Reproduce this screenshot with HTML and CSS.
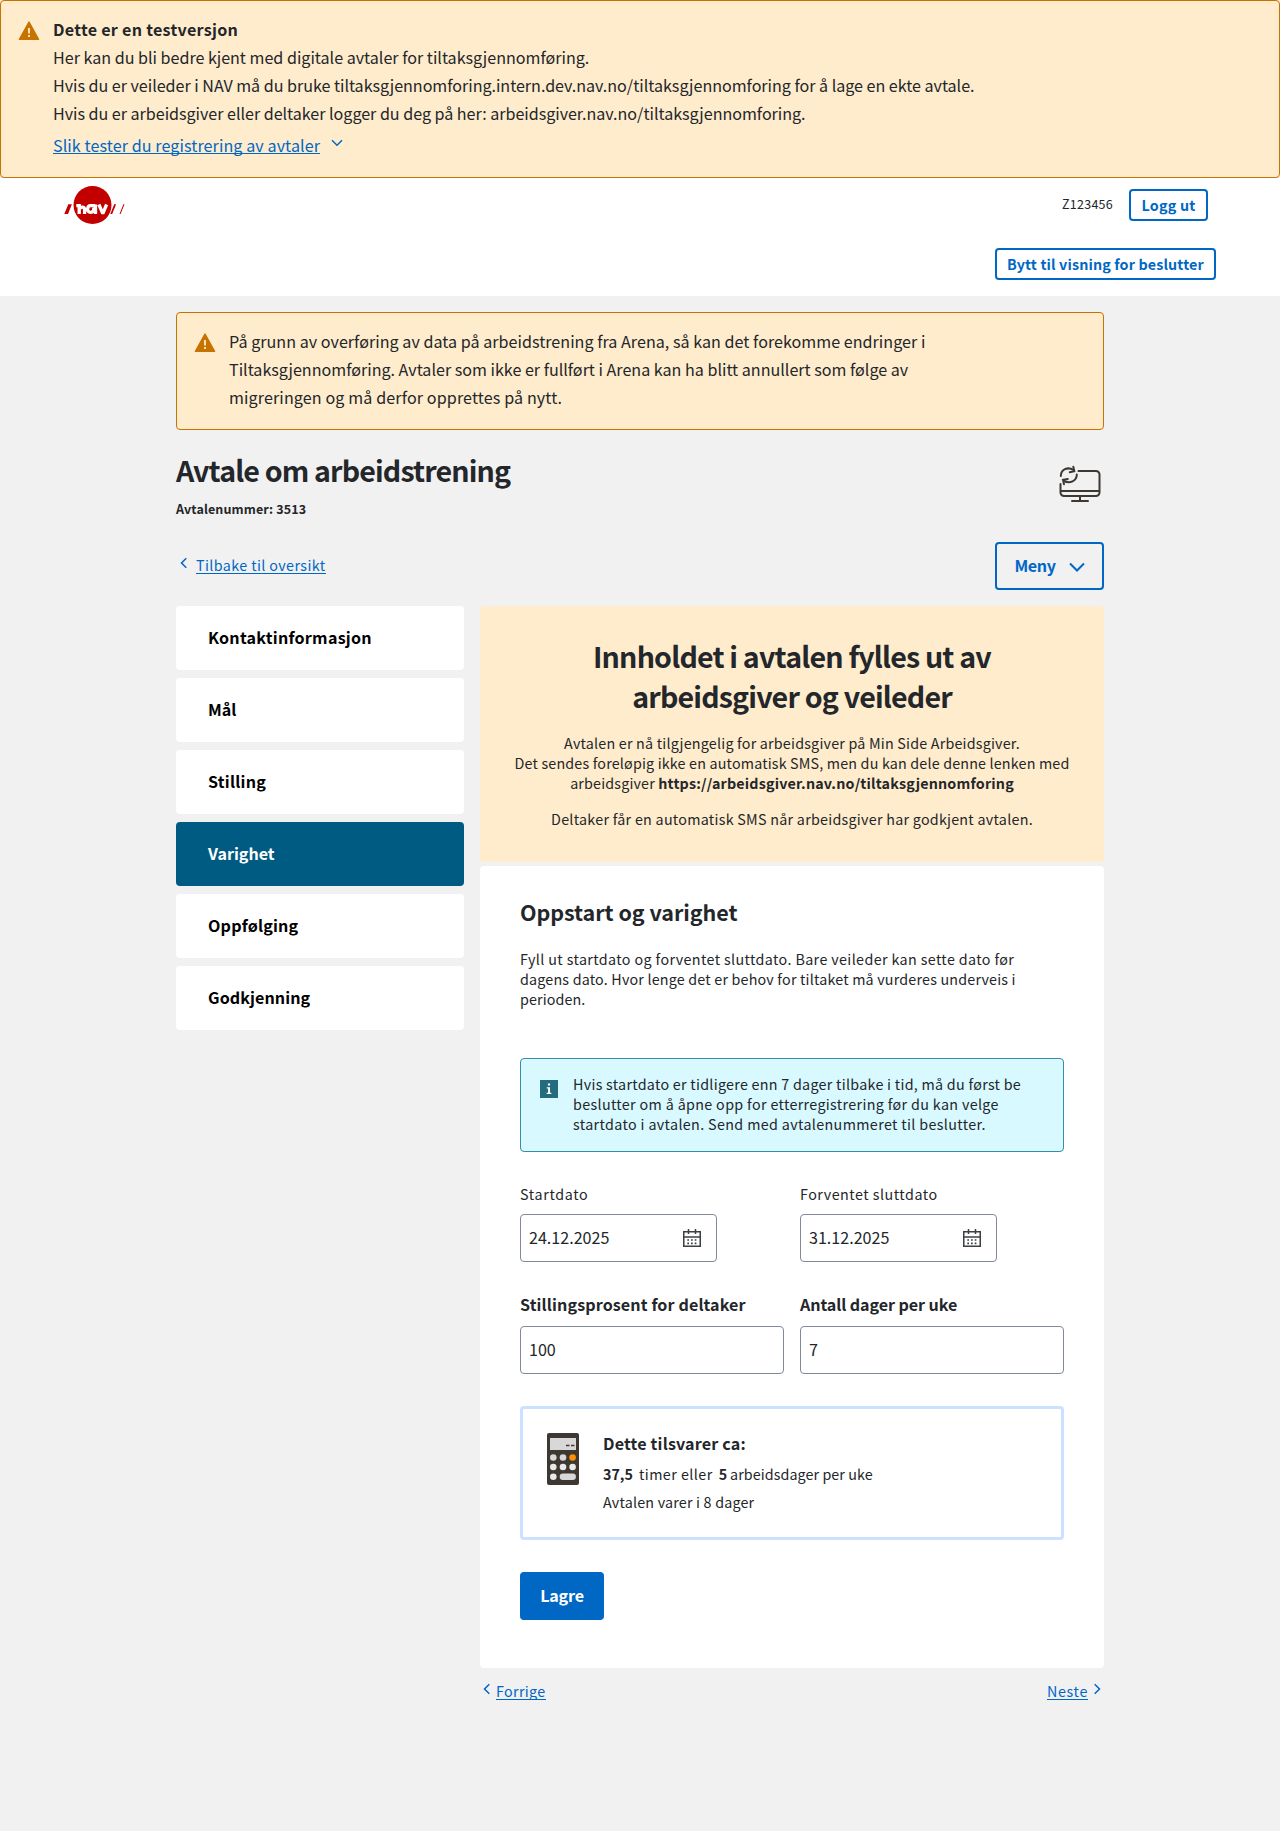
FILE: index.html
```html
<!DOCTYPE html>
<html lang="nb">
<head>
<meta charset="utf-8">
<title>Avtale om arbeidstrening</title>
<link rel="stylesheet" href="styles.css">
</head>
<body>
<section class="alert alert-test">
  <svg class="alert-icon" viewBox="0 0 24 24"><path fill="#c77300" fill-rule="evenodd" d="M12 2.250a.75.75 0 0 1 .66.39l9.520 17.250a.75.75 0 0 1-.65 1.110H2.470a.75.75 0 0 1-.65-1.110l9.520-17.250A.75.75 0 0 1 12 2.250ZM11.100 9v5.500h1.800V9ZM11.100 16v1.900h1.800V16Z"/></svg>
  <div class="alert-body">
    <strong class="lead">Dette er en testversjon</strong>
    <span class="l1">Her kan du bli bedre kjent med digitale avtaler for tiltaksgjennomføring.</span>
    <span class="l2">Hvis du er veileder i NAV må du bruke tiltaksgjennomforing.intern.dev.nav.no/tiltaksgjennomforing for å lage en ekte avtale.</span>
    <span class="l3">Hvis du er arbeidsgiver eller deltaker logger du deg på her: arbeidsgiver.nav.no/tiltaksgjennomforing.</span>
    <div class="expand"><a class="link" href="#">Slik tester du registrering av avtaler</a><svg class="chev-down" viewBox="0 0 12 8"><path d="M1 1.200l5 5 5-5"/></svg></div>
  </div>
</section>
<header class="header">
  <div class="header-top">
    <svg class="logo" viewBox="0 0 62 40">
      <circle cx="28.500" cy="20" r="19" fill="#c30000"/>
      <path fill="#c30000" d="M4.300 19.300h3.600L4 29H.3zM50.200 19.300h1.900L48.200 29h-1.900zM59.400 19.300h1.100L56.600 29h-1.100z"/>
      <path fill="none" stroke="#fff" stroke-width="3.300" d="M12.300 20.600h2.900v8.400M15.600 23.600c1.400-2.300 5-2 5 1v4.400M31.200 20.600h-4.600c-3.600 0-4.300 6.800 0 6.800 3.200 0 3.300-3.400 3.100-4.800M31.500 19.400V29M34.900 19.500l3.500 8.200h.8l3.400-8.200"/>
    </svg>
    <div class="user"><span class="ident">Z123456</span><button class="btn btn-small btn-logout">Logg ut</button></div>
  </div>
  <div class="header-sub"><button class="btn btn-small btn-switch">Bytt til visning for beslutter</button></div>
</header>
<main class="page">
  <section class="alert alert-arena">
    <svg class="alert-icon" viewBox="0 0 24 24"><path fill="#c77300" fill-rule="evenodd" d="M12 2.250a.75.75 0 0 1 .66.39l9.520 17.250a.75.75 0 0 1-.65 1.110H2.470a.75.75 0 0 1-.65-1.110l9.520-17.250A.75.75 0 0 1 12 2.250ZM11.100 9v5.500h1.800V9ZM11.100 16v1.900h1.800V16Z"/></svg>
    <div class="alert-body">
      <span class="a1">På grunn av overføring av data på arbeidstrening fra Arena, så kan det forekomme endringer i</span>
      <span class="a2">Tiltaksgjennomføring. Avtaler som ikke er fullført i Arena kan ha blitt annullert som følge av</span>
      <span class="a3">migreringen og må derfor opprettes på nytt.</span>
    </div>
  </section>
  <div class="title-row">
    <div>
      <h1 class="title">Avtale om arbeidstrening</h1>
      <p class="number">Avtalenummer: 3513</p>
    </div>
    <svg class="screen" viewBox="0 0 42 40" fill="none" stroke="#3e3832" stroke-width="2" stroke-linecap="round">
      <path d="M19.500 6H37a3.500 3.500 0 0 1 3.500 3.500v18A3.500 3.500 0 0 1 37 31H5a3.500 3.500 0 0 1-3.500-3.500V19M1.500 26h39M21 31v5M13 36h16"/>
      <path d="M1.800 11C2 4.500 8.500 1.300 14.500 5M17.800 9.500c0 6.500-7 9.500-12.800 6.500"/>
      <path d="M14.300 1.800l1 4.400-4.600 1M5 19.300l-1-4.500 4.800-.8"/>
    </svg>
  </div>
  <div class="action-row">
    <a class="back" href="#"><svg class="chev" viewBox="0 0 8 12"><path d="M6.300 1.200l-4.800 4.800 4.800 4.800"/></svg><span class="link">Tilbake til oversikt</span></a>
    <button class="btn btn-menu"><span>Meny</span><svg viewBox="0 0 16 10"><path d="M1 1.500l7 7 7-7"/></svg></button>
  </div>
  <div class="columns">
    <nav class="steps">
      <a class="step s1">Kontaktinformasjon</a>
      <a class="step">Mål</a>
      <a class="step s3">Stilling</a>
      <a class="step active">Varighet</a>
      <a class="step s5">Oppfølging</a>
      <a class="step s6">Godkjenning</a>
    </nav>
    <div class="content">
      <section class="intro">
        <h2 class="intro-title">Innholdet i avtalen fylles ut av<br>arbeidsgiver og veileder</h2>
        <p class="small"><span class="i1">Avtalen er nå tilgjengelig for arbeidsgiver på Min Side Arbeidsgiver.</span><br><span class="i2">Det sendes foreløpig ikke en automatisk SMS, men du kan dele denne lenken med</span><br><span class="i3">arbeidsgiver <b>https://arbeidsgiver.nav.no/tiltaksgjennomforing</b></span></p>
        <p class="small"><span class="i4">Deltaker får en automatisk SMS når arbeidsgiver har godkjent avtalen.</span></p>
      </section>
      <section class="card">
        <h2 class="card-title">Oppstart og varighet</h2>
        <p class="small help"><span class="p1">Fyll ut startdato og forventet sluttdato. Bare veileder kan sette dato før</span><br><span class="p2">dagens dato. Hvor lenge det er behov for tiltaket må vurderes underveis i</span><br><span class="p3">perioden.</span></p>
        <div class="info">
          <svg class="info-icon" viewBox="0 0 18 18"><path fill="#236b7d" d="M0 0h18v18H0z"/><path fill="#fff" d="M7.900 3.500h2.200v2H7.900zM6.700 7.300H10v5.500h1.400V14H6.600v-1.200H8.100V8.500H6.700z"/></svg>
          <p class="small"><span class="n1">Hvis startdato er tidligere enn 7 dager tilbake i tid, må du først be</span><br><span class="n2">beslutter om å åpne opp for etterregistrering før du kan velge</span><br><span class="n3">startdato i avtalen. Send med avtalenummeret til beslutter.</span></p>
        </div>
        <div class="dates">
          <div class="field"><label class="label d1">Startdato</label><div class="input date"><span>24.12.2025</span><svg viewBox="0 0 18 18"><path fill="none" stroke="#3c3f43" stroke-width="1.500" d="M.75 2.750h16.500v14.500H.75zM.75 8h16.500M5.500 0v5M12.500 0v5"/><path stroke="#3c3f43" stroke-width="1.700" stroke-dasharray="1.700 2" d="M4.300 11h9.200M4.300 14.300h9.200"/></svg></div></div>
          <div class="field"><label class="label d2">Forventet sluttdato</label><div class="input date"><span>31.12.2025</span><svg viewBox="0 0 18 18"><path fill="none" stroke="#3c3f43" stroke-width="1.500" d="M.75 2.750h16.500v14.500H.75zM.75 8h16.500M5.500 0v5M12.500 0v5"/><path stroke="#3c3f43" stroke-width="1.700" stroke-dasharray="1.700 2" d="M4.300 11h9.200M4.300 14.300h9.200"/></svg></div></div>
        </div>
        <div class="numbers">
          <div class="field"><label class="label-strong m1">Stillingsprosent for deltaker</label><div class="input"><span>100</span></div></div>
          <div class="field"><label class="label-strong m2">Antall dager per uke</label><div class="input"><span>7</span></div></div>
        </div>
        <div class="summary">
          <svg class="calc" viewBox="0 0 32 52">
            <rect width="32" height="52" rx="2" fill="#3e3832"/><path fill="#d8d8d8" d="M3 5h26v12H3z"/><path stroke="#3e3832" stroke-width="1.500" d="M19 12.500h3.500M24 12.500h3.500"/>
            <g fill="#d8d8d8"><circle cx="6.300" cy="24.500" r="3.300"/><circle cx="16" cy="24.500" r="3.300"/><circle cx="25.600" cy="24.500" r="3.300" fill="#ff9100"/></g>
            <g fill="#e9e9e9"><circle cx="6.300" cy="34" r="3.300"/><circle cx="16" cy="34" r="3.300"/><circle cx="25.600" cy="34" r="3.300"/><circle cx="6.300" cy="43.700" r="3.300"/></g>
            <rect x="12.700" y="40.500" width="16.200" height="6.500" rx="3.200" fill="#d8d8d8"/>
          </svg>
          <div class="sum-body">
            <p class="sum-title">Dette tilsvarer ca:</p>
            <p class="sum-line"><b>37,5</b><span class="t1">timer eller</span><b>5</b><span class="t2">arbeidsdager per uke</span></p>
            <p class="sum-line"><span class="t3">Avtalen varer i 8 dager</span></p>
          </div>
        </div>
        <button class="btn btn-save">Lagre</button>
      </section>
      <div class="pager">
        <a href="#"><svg class="chev" viewBox="0 0 8 12"><path d="M6.300 1.200l-4.800 4.800 4.800 4.800"/></svg><span class="link prev">Forrige</span></a>
        <a href="#"><span class="link next">Neste</span><svg class="chev" viewBox="0 0 8 12"><path d="M1.700 1.200l4.800 4.800-4.800 4.800"/></svg></a>
      </div>
    </div>
  </div>
</main>
</body>
</html>
```
FILE: styles.css
```css
* { box-sizing: border-box; }
body {
  margin: 0;
  background: #f1f1f1;
  color: #23262a;
  font: 16.1px/28px "Noto Sans CJK SC", "Noto Sans", sans-serif;
}
h1, h2, p { margin: 0; font-weight: 700; }
p { font-weight: 400; }
span, b, label, a, button { white-space: nowrap; }
svg { flex: none; display: block; }
a { color: #0067c5; text-decoration: none; }
.link { border-bottom: 1px solid #0067c5; line-height: 16px; display: inline-block; }

/* Alerts */
.alert { display: flex; gap: 12px; padding: 15px 16px 16px; background: #ffeccc; border: 1px solid #c77300; border-radius: 4px; }
.alert-icon { width: 24px; height: 24px; margin-top: 3px; }
.alert-body { display: flex; flex-direction: column; align-items: flex-start; margin-top: -1px; }
.alert-test { height: 178px; }
.lead { letter-spacing: .28px; }
.l2, .l3 { letter-spacing: -.02px; }
.a1 { letter-spacing: .03px; }
.a3 { letter-spacing: .12px; }
.expand { display: flex; margin-top: 10px; align-items: center; letter-spacing: .09px; }
.chev-down { width: 12px; height: 8px; margin: -5px 0 0 11px; }
.chev-down path, .chev path, .btn-menu path { fill: none; stroke: #0067c5; stroke-width: 1.5; }

/* Header */
.header { height: 118px; padding: 7px 64px 0; background: #fff; }
.header-top { display: flex; justify-content: space-between; align-items: center; height: 40px; }
.logo { width: 62px; height: 40px; }
.user { display: flex; align-items: center; gap: 16px; margin-right: 8px; font-size: 12.5px; }
.ident { letter-spacing: .25px; margin-top: -2px; }
.header-sub { display: flex; justify-content: flex-end; margin-top: 23px; }
.btn { border: 2px solid #0067c5; border-radius: 4px; background: transparent; color: #0067c5; font: 700 16.1px/24px "Noto Sans CJK SC", "Noto Sans", sans-serif; padding: 0 0 2px; }
.btn-small { width: 79px; height: 32px; padding: 0; font-size: 14.3px; letter-spacing: .2px; }
.btn-switch { width: 221px; letter-spacing: .14px; }

/* Page */
.page { width: 928px; margin: 16px auto 0; }
.alert-arena { height: 118px; }
.title-row { display: flex; justify-content: space-between; margin-top: 20px; }
.title { font-size: 28.6px; line-height: 40px; letter-spacing: -.86px; }
.number { font-size: 12.5px; line-height: 20px; font-weight: 700; margin-top: 9px; letter-spacing: .13px; }
.screen { width: 42px; height: 40px; margin: 15px 3px 0 0; }
.action-row { display: flex; justify-content: space-between; align-items: center; margin-top: 23px; height: 48px; }
.back { display: flex; align-items: center; gap: 8px; padding: 0 0 2px 4px; font-size: 14.3px; letter-spacing: .4px; }
.chev { width: 8px; height: 12px; margin-top: -5px; }
.btn-menu { width: 109px; height: 48px; display: flex; align-items: center; justify-content: center; gap: 13px; letter-spacing: -.4px; }
.btn-menu svg { width: 16px; height: 10px; margin-top: 4px; }
.btn-menu path { stroke-width: 2; }

.columns { display: flex; gap: 16px; margin-top: 16px; }
.steps { width: 288px; display: flex; flex-direction: column; gap: 8px; }
.step { height: 64px; padding: 17px 32px 0; background: #fff; border-radius: 4px; color: #000; font-weight: 700; }
.step.active { background: #005b82; color: #fff; }
.s1, .s3 { letter-spacing: .25px; }
.s5 { letter-spacing: .2px; }
.s6 { letter-spacing: .1px; }

.content { width: 624px; }
.small { font-size: 14.3px; line-height: 20px; }
.intro { height: 256px; padding: 30px 0; background: #ffeccc; border-radius: 4px; text-align: center; }
.intro-title { font-size: 28.6px; line-height: 40px; margin-bottom: 17px; letter-spacing: -.82px; }
.intro .small + .small { margin-top: 16px; }
.i1 { letter-spacing: .21px; }
.i2 { letter-spacing: .175px; }
.i3 { letter-spacing: .17px; }
.i4 { letter-spacing: .27px; }

/* Form card */
.card { height: 802px; margin-top: 4px; padding: 30px 40px 0; background: #fff; border-radius: 4px; }
.card-title { font-size: 21.5px; line-height: 32px; letter-spacing: -.05px; }
.help { margin-top: 21px; }
.p1 { letter-spacing: .38px; }
.p2 { letter-spacing: .19px; }
.p3 { letter-spacing: .1px; }
.info { display: flex; gap: 15px; height: 94px; margin-top: 49px; padding: 15px 19px; background: #d8f9ff; border: 1px solid #368da8; border-radius: 4px; }
.info-icon { width: 18px; height: 18px; margin-top: 6px; }
.n1 { letter-spacing: .28px; }
.n2 { letter-spacing: .345px; }
.n3 { letter-spacing: .36px; }
.dates, .numbers { display: grid; grid-template-columns: 264px 264px; gap: 16px; }
.dates { margin-top: 32px; }
.numbers { margin-top: 28px; }
.label { display: block; font-size: 14.3px; line-height: 20px; margin-bottom: 10px; }
.d1 { letter-spacing: .65px; }
.d2 { letter-spacing: .5px; }
.label-strong { display: block; font-weight: 700; margin-bottom: 8px; }
.m1 { letter-spacing: .12px; }
.m2 { letter-spacing: -.08px; }
.input { display: flex; align-items: center; justify-content: space-between; height: 48px; padding: 0 8px; border: 1px solid #818a98; border-radius: 4px; background: #fff; }
.input span { padding-bottom: 2px; }
.date { width: 197px; padding-right: 15px; }
.date svg { width: 18px; height: 18px; margin-top: -1px; }
.summary { display: flex; gap: 24px; height: 134px; margin-top: 32px; padding: 21px 24px; border: 3px solid #cce1ff; border-radius: 4px; }
.calc { width: 32px; height: 52px; margin-top: 3px; }
.sum-body { margin-top: -1px; }
.sum-title { font-weight: 700; margin-bottom: 3px; letter-spacing: .18px; }
.sum-line { display: flex; font-size: 14.3px; }
.t1 { margin: 0 6px; letter-spacing: .45px; }
.t2 { margin-left: 3px; letter-spacing: .08px; }
.t3 { letter-spacing: .2px; }
.btn-save { display: block; width: 84px; height: 48px; margin-top: 32px; background: #0067c5; color: #fff; letter-spacing: -.2px; }

.pager { display: flex; justify-content: space-between; padding: 15px 3px 0; font-size: 14.3px; }
.pager a { display: flex; align-items: center; gap: 5px; }
.prev { letter-spacing: .35px; }
.next { letter-spacing: .65px; }
```
